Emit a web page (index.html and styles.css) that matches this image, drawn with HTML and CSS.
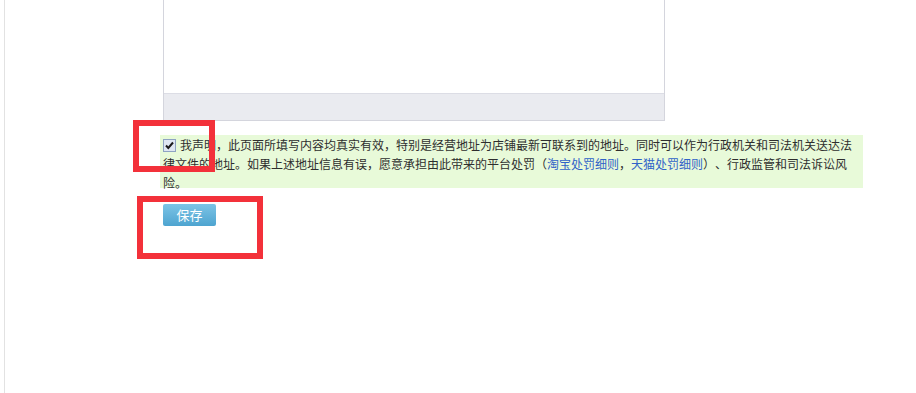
FILE: index.html
```html
<!DOCTYPE html>
<html lang="zh-CN">
<head>
<meta charset="utf-8">
<title>声明</title>
<link rel="stylesheet" href="styles.css">
</head>
<body>
<div class="page">
  <div class="editor">
    <div class="editor-body"></div>
    <div class="editor-foot"></div>
  </div>
  <div class="notice">
    <span class="check"><svg width="13" height="13" viewBox="0 0 13 13"><rect x="0.5" y="0.5" width="12" height="12" fill="#dfe7f2" stroke="#8ea3c2"/><path d="M3 6.5 L5.3 9 L10 3.5" fill="none" stroke="#1b1b1b" stroke-width="2"/></svg></span>我声明，此页面所填写内容均真实有效，特别是经营地址为店铺最新可联系到的地址。同时可以作为行政机关和司法机关送达法律文件的地址。如果上述地址信息有误，愿意承担由此带来的平台处罚（<a class="link" href="#">淘宝处罚细则</a>，<a class="link" href="#">天猫处罚细则</a>）、行政监管和司法诉讼风险。
  </div>
  <button class="save" type="button">保存</button>
</div>
<div class="mark mark-one"></div>
<div class="mark mark-two"></div>
</body>
</html>
```
FILE: styles.css
```css
html, body {
  margin: 0;
  padding: 0;
  background: #ffffff;
}
body {
  font-family: "Noto Sans CJK SC", "Liberation Sans", sans-serif;
  font-size: 12px;
  color: #2e2e2e;
  position: relative;
  height: 393px;
  overflow: hidden;
}
.page {
  margin-left: 4px;
  border-left: 1px solid #e2e2e2;
  height: 393px;
  padding-left: 158px;
  box-sizing: border-box;
}
.editor {
  width: 500px;
  border: 1px solid #d4d5dd;
  border-top: none;
}
.editor-body {
  height: 93px;
  background: #ffffff;
  border-bottom: 1px solid #dcdde5;
}
.editor-foot {
  height: 26px;
  background: #eaebf0;
}
.notice {
  margin-top: 14px;
  margin-left: -3px;
  width: 700px;
  padding-left: 3px;
  background: #e8fad9;
  line-height: 19px;
  height: 53px;
  text-spacing-trim: space-all;
}
.check {
  display: inline-block;
  width: 13px;
  height: 13px;
  vertical-align: -2px;
  margin-right: 4px;
}
.check svg {
  display: block;
}
.link {
  color: #2f62c8;
  text-decoration: none;
}
.save {
  display: block;
  margin-top: 16px;
  width: 53px;
  height: 22px;
  padding: 0;
  border: none;
  border-radius: 2px;
  background: linear-gradient(#7cc4e6, #4ea4d0);
  color: #ffffff;
  font-family: "Noto Sans CJK SC", "Liberation Sans", sans-serif;
  font-size: 13px;
  line-height: 22px;
}
.mark {
  position: absolute;
  border: 6px solid #f3313a;
  box-sizing: border-box;
}
.mark-one {
  left: 133px;
  top: 120px;
  width: 82px;
  height: 52px;
}
.mark-two {
  left: 137px;
  top: 196px;
  width: 126px;
  height: 63px;
}
```
